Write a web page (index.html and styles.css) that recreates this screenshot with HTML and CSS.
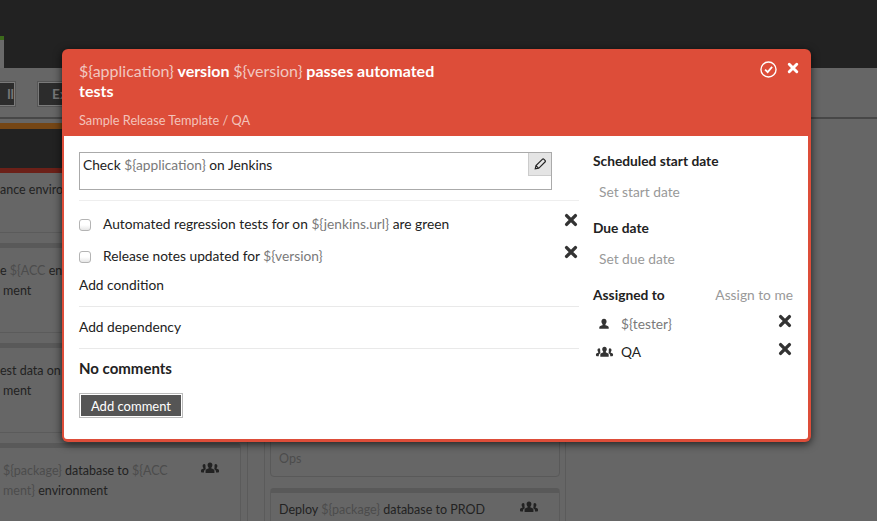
FILE: index.html
```html
<!DOCTYPE html>
<html lang="en">
    <head>
        <meta charset="UTF-8" />
        <title>Release task</title>
        <link rel="stylesheet" href="styles.css">
    </head>
    <body>
        <svg class="defs" width="0" height="0">
            <symbol id="i-x" viewBox="0 0 14 14">
                <path d="M2.6 2.6 11.4 11.4M11.4 2.6 2.6 11.4" fill="none" stroke="currentColor" stroke-width="3.4" stroke-linecap="round" />
            </symbol>
            <symbol id="i-user" viewBox="0 0 14 14">
                <path d="M7 1c1.9 0 3 1.4 3 3.2 0 1.300-.6 2.400-1.300 3v1.300c1.700.5 3.800 1 3.800 2.500v1.500h-11v-1.500c0-1.500 2.100-2 3.800-2.500v-1.300c-.7-.6-1.300-1.700-1.300-3C4 2.400 5.100 1 7 1z" fill="currentColor" />
            </symbol>
            <symbol id="i-group" viewBox="0 0 20 12">
                <path d="M10 .5c1.500 0 2.400 1.100 2.400 2.600 0 1-.5 1.900-1 2.400v1c1.400.4 3 .8 3 2.100v2.400h-8.800v-2.400c0-1.300 1.600-1.700 3-2.100v-1c-.5-.5-1-1.400-1-2.400C7.600 1.600 8.500.5 10 .5z" fill="currentColor" />
                <path d="M15.500 2c1.200 0 1.900.9 1.900 2 0 .8-.3 1.500-.8 1.900v.8c1.100.3 2.400.6 2.400 1.700v1.100c0 .5-.3.9-.8.9h-2.200V9.500c0-1.200-.9-1.800-1.900-2.200.2-.4.400-.8.400-1.200V4c0-1.100.4-2 1-2zM4.500 2c-1.200 0-1.900.9-1.900 2 0 .8.300 1.500.8 1.900v.8c-1.100.3-2.400.6-2.400 1.700v1.100c0 .5.300.9.800.9h2.200V9.500c0-1.200.9-1.800 1.900-2.200-.2-.4-.4-.8-.4-1.200V4c0-1.100-.4-2-1-2z" fill="currentColor" />
            </symbol>
        </svg>

        <div class="topbar">
            <div class="tab"></div>
        </div>
        <div class="toolbar">
            <span class="tool-btn tool-first">ll</span>
            <span class="tool-btn tool-second">Ex</span>
        </div>

        <div class="board">
            <div class="col col-first">
                <div class="phase"></div>
                <div class="card card-active">
                    <div class="line">ance environment</div>
                </div>
                <div class="card">
                    <div class="line">e <span class="var">${ACC</span> environment</div>
                    <div class="line line-end">ment</div>
                </div>
                <div class="card">
                    <div class="line">est data on</div>
                    <div class="line line-end">ment</div>
                </div>
                <div class="card">
                    <div class="card-row">
                        <div class="line line-end"><span class="var">${package}</span> database to <span class="var">${ACC</span></div>
                        <svg class="card-icon"><use href="#i-group" /></svg>
                    </div>
                    <div class="line line-end"><span class="var">ment}</span> environment</div>
                </div>
            </div>
            <div class="col col-second">
                <div class="card card-ops"><span class="var">Ops</span></div>
                <div class="card card-deploy">
                    <div class="card-row">
                        <div class="line">Deploy <span class="var">${package}</span> database to PROD</div>
                        <svg class="card-icon"><use href="#i-group" /></svg>
                    </div>
                </div>
            </div>
        </div>

        <div class="modal">
            <div class="modal-head">
                <div class="modal-titles">
                    <h2><span class="title-var">${application}</span> version <span class="title-var">${version}</span> passes automated tests</h2>
                    <p>Sample Release Template / QA</p>
                </div>
                <div class="modal-actions">
                    <svg class="icon-check" viewBox="0 0 16 16">
                        <circle cx="8" cy="8" r="7.100" fill="none" stroke="#fff" stroke-width="1.300" />
                        <path d="M4.800 8.200 7.200 10.500 11.400 5.600" fill="none" stroke="#fff" stroke-width="1.700" />
                    </svg>
                    <svg class="icon-close"><use href="#i-x" /></svg>
                </div>
            </div>
            <div class="modal-body">
                <div class="main">
                    <div class="desc">
                        <span class="desc-text">Check <span class="var">${application}</span> on Jenkins</span>
                        <button type="button" class="edit">
                            <svg viewBox="0 0 14 14" width="14" height="14">
                                <path d="M2.300 11.700 3 8.600 9.300 2.300c.5-.5 1.200-.5 1.700 0l1 1c.5.5.5 1.200 0 1.700L5.700 11.300zM3 8.600 5.700 11.300" fill="none" stroke="#222" stroke-width="1.200" />
                            </svg>
                        </button>
                    </div>
                    <div class="checks">
                        <label class="check">
                            <input type="checkbox" />
                            <span class="check-text">Automated regression tests for on <span class="var">${jenkins.url}</span> are green</span>
                            <svg class="icon-x"><use href="#i-x" /></svg>
                        </label>
                        <label class="check">
                            <input type="checkbox" />
                            <span class="check-text">Release notes updated for <span class="var">${version}</span></span>
                            <svg class="icon-x"><use href="#i-x" /></svg>
                        </label>
                        <div class="add-link">Add condition</div>
                    </div>
                    <div class="section">Add dependency</div>
                    <div class="section comments">
                        <h3>No comments</h3>
                        <button type="button" class="add-comment">Add comment</button>
                    </div>
                </div>
                <div class="side">
                    <h4>Scheduled start date</h4>
                    <div class="date">Set start date</div>
                    <h4>Due date</h4>
                    <div class="date">Set due date</div>
                    <div class="assign-head">
                        <h4>Assigned to</h4>
                        <span class="muted">Assign to me</span>
                    </div>
                    <div class="assignee">
                        <svg class="who who-user"><use href="#i-user" /></svg>
                        <span class="var name">${tester}</span>
                        <svg class="icon-x"><use href="#i-x" /></svg>
                    </div>
                    <div class="assignee">
                        <svg class="who who-group"><use href="#i-group" /></svg>
                        <span class="name">QA</span>
                        <svg class="icon-x"><use href="#i-x" /></svg>
                    </div>
                </div>
            </div>
        </div>
    </body>
</html>
```

FILE: styles.css
```css
* {
    box-sizing: border-box;
}

html,
body {
    height: 100%;
}

body {
    position: relative;
    margin: 0;
    overflow: hidden;
    color: #222;
    background-color: #666;
    font-family: Lato, "Noto Sans", sans-serif;
    font-size: 13.75px;
    line-height: 20px;
}

h2,
h3,
h4,
p {
    margin: 0;
}

.defs {
    position: absolute;
}

.var {
    color: #7a7a7a;
}

/* dimmed page behind the dialog */
.topbar {
    height: 68px;
    padding-top: 36px;
    background-color: #222;
}

.tab {
    width: 4px;
    height: 32px;
    border-top: 4px solid #3d6a1c;
    background-color: #6a6a6a;
}

.toolbar {
    display: flex;
    height: 51px;
    padding-top: 14px;
    border-bottom: 2px solid #474747;
}

.tool-btn {
    height: 24px;
    border: 1px solid #7a7a7a;
    outline: 1px solid #555;
    color: #777;
    background-color: #2c2c2c;
    font-weight: 700;
    line-height: 22px;
    overflow: hidden;
}

.tool-first {
    width: 16px;
    margin-left: -1px;
    text-align: right;
}

.tool-second {
    width: 60px;
    margin-left: 23px;
    padding-left: 13px;
}

.board {
    display: flex;
    height: 402px;
    overflow: hidden;
    font-size: 12.5px;
}

.col {
    flex: none;
}

.col .var {
    color: #4c4c4c;
}

.col-first {
    width: 248px;
    padding-top: 4px;
    padding-right: 6px;
    border-right: 1px solid #5b5b5b;
}

.phase {
    height: 45px;
    border-top: 6px solid #754615;
    background-color: #222;
}

.col-second {
    width: 302px;
    margin-left: 16px;
    padding: 0 5px;
    border-right: 1px solid #5b5b5b;
    border-left: 1px solid #5b5b5b;
}

.card {
    height: 90px;
    margin-bottom: 10px;
    padding-top: 13px;
    border-top: 5px solid #595959;
    border-right: 1px solid #5b5b5b;
    border-bottom: 1px solid #5b5b5b;
    border-top-right-radius: 4px;
    border-bottom-right-radius: 4px;
}

.card-active {
    height: 65px;
    padding-top: 7px;
    border-top-color: #6c2018;
}

.card-row {
    display: flex;
    justify-content: space-between;
}

.card-icon {
    flex: none;
    width: 20px;
    height: 12px;
    margin: 1px 20px 0 0;
    color: #222;
}

.line {
    white-space: nowrap;
}

.line-end {
    padding-left: 3px;
}

.card-ops {
    display: flex;
    align-items: flex-end;
    height: 358px;
    margin-bottom: 11px;
    padding: 0 8px 7px;
    border: 1px solid #595959;
    border-radius: 4px;
}

.card-deploy {
    padding: 7px 0 0 8px;
    border-left: 1px solid #5b5b5b;
    border-top-left-radius: 4px;
}

/* dialog */
.modal {
    position: absolute;
    top: 49px;
    left: 62px;
    width: 749px;
    height: 393px;
    padding: 0 3px 3px 2px;
    border-radius: 6px;
    background-color: #dd4d39;
    box-shadow: 0 2px 8px rgba(0, 0, 0, 0.7);
}

.modal-head {
    display: flex;
    justify-content: space-between;
    height: 87px;
    padding: 12px 0 0 15px;
    color: #fff;
}

.modal-titles {
    width: 365px;
}

.modal-titles h2 {
    font-size: 16px;
    font-weight: 700;
}

.title-var {
    color: #f1c7c0;
    font-weight: 400;
}

.modal-titles p {
    margin-top: 9px;
    color: #f3c3bb;
    font-size: 12.75px;
}

.modal-actions {
    display: flex;
    gap: 10px;
    height: 17px;
    margin-right: 9px;
    align-items: flex-start;
}

.icon-check {
    width: 17px;
    height: 17px;
}

.icon-close {
    width: 12px;
    height: 12px;
    margin-top: 1px;
}

.modal-body {
    display: flex;
    height: 303px;
    padding: 16px 15px 0;
    border-radius: 0 0 3px 3px;
    background-color: #fff;
}

.main {
    width: 500px;
    margin-right: 14px;
}

.desc {
    display: flex;
    justify-content: space-between;
    width: 473px;
    height: 38px;
    padding-left: 3px;
    border: 1px solid #aaa;
}

.desc-text {
    padding-top: 2px;
}

.edit {
    display: flex;
    align-items: center;
    justify-content: center;
    width: 23px;
    height: 23px;
    padding: 0;
    border: 1px solid #ccc;
    border-width: 0 0 1px 1px;
    background-color: #e4e4e4;
}

.checks {
    margin-top: 10px;
    padding-top: 8px;
    padding-bottom: 11px;
    border-top: 1px solid #eee;
}

.check {
    display: flex;
    height: 32px;
    padding-top: 5px;
}

.check input {
    flex: none;
    width: 12px;
    height: 12px;
    margin: 5px 12px 0 0;
    border: 1px solid #b4b4b4;
    border-radius: 3px;
    appearance: none;
    background: linear-gradient(#fff 50%, #e6e6e6);
}

.check-text {
    flex: 1;
}

.icon-x {
    flex: none;
    width: 14px;
    height: 14px;
    color: #333;
}

.check .icon-x {
    margin: -1px 1px 0 0;
}

.add-link {
    margin-top: 2px;
}

.section {
    padding: 10px 0;
    border-top: 1px solid #e9e9e9;
}

.comments {
    margin-top: 1px;
    padding-top: 9px;
}

.comments h3 {
    font-size: 15px;
    font-weight: 700;
}

.add-comment {
    display: block;
    width: 104px;
    height: 25px;
    margin-top: 15px;
    padding: 0;
    border: 2px solid #fff;
    outline: 1px solid #bbb;
    outline-offset: -1px;
    color: #fff;
    background-color: #555;
    font: inherit;
    font-size: 13px;
    line-height: 20px;
}

.side {
    width: 200px;
    margin-top: -1px;
}

.side h4 {
    font-size: 13.75px;
    font-weight: 700;
}

.date {
    margin: 11px 0 16px;
    padding-left: 6px;
    color: #999;
}

.assign-head {
    display: flex;
    justify-content: space-between;
    margin-bottom: 9px;
}

.muted {
    color: #999;
}

.assignee {
    display: flex;
    align-items: center;
    height: 20px;
    margin-bottom: 8px;
}

.who {
    flex: none;
    color: #333;
}

.who-user {
    width: 12px;
    height: 12px;
    margin: 0 11px 0 5px;
}

.who-group {
    width: 19px;
    height: 12px;
    margin: 0 7px 0 2px;
}

.name {
    flex: 1;
}

.assignee .icon-x {
    margin: -6px 1px 0 0;
}
```
